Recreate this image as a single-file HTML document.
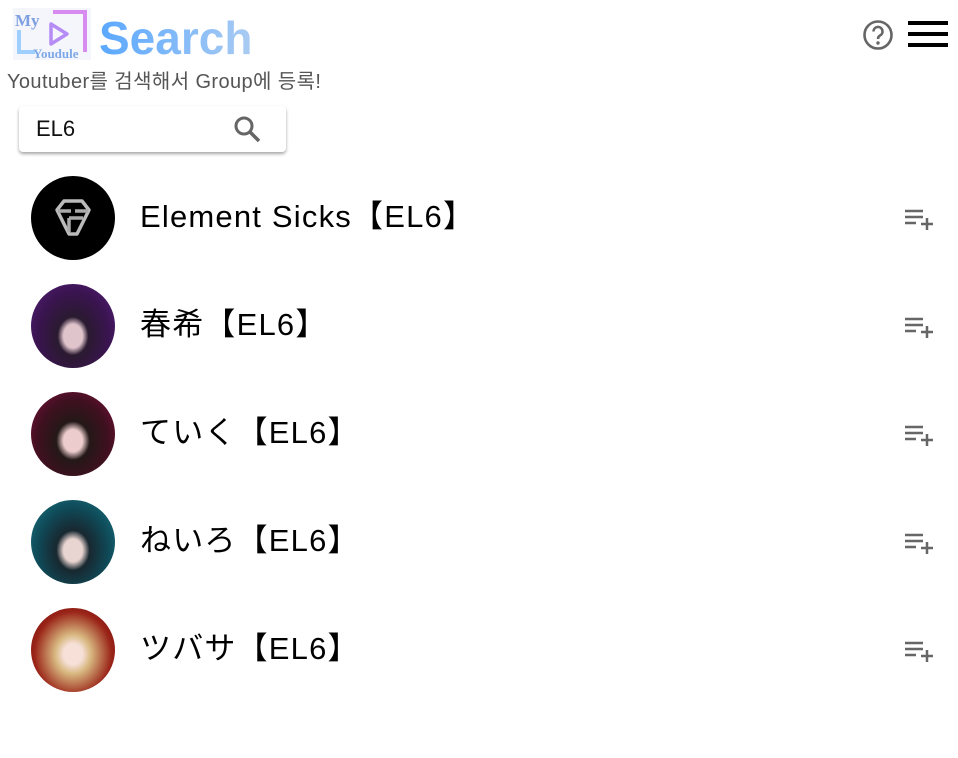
<!DOCTYPE html>
<html><head><meta charset="utf-8"><style>
body{margin:0;width:958px;height:696px;overflow:hidden;background:#fff;font-family:"Liberation Sans","Noto Sans CJK JP",sans-serif;position:relative}
.abs{position:absolute}
.row{position:absolute;left:0;width:958px;height:108px}
.av{position:absolute;left:31px;top:-42px;width:84px;height:84px;border-radius:50%}
.nm{position:absolute;left:140px;top:-21px;font-size:31px;letter-spacing:1.2px;color:#000;line-height:40px;white-space:nowrap;font-family:"Liberation Sans","Noto Sans CJK JP",sans-serif}
</style></head><body>
<svg class="abs" style="left:13px;top:8px" width="78" height="52" viewBox="0 0 78 52">
<rect x="0" y="0" width="78" height="52" fill="#f4f6fb"/>
<path d="M40 4 H72 V44" stroke="#d98cf0" stroke-width="4" fill="none"/>
<path d="M6 22 V44 H22" stroke="#9fcfff" stroke-width="4" fill="none"/>
<path d="M38 16 L54 26 L38 36 Z" stroke="#b58cf5" stroke-width="3.5" fill="none" stroke-linejoin="round"/>
<text x="2" y="18" font-family="Liberation Serif,serif" font-size="17" font-weight="bold" fill="#7fa0e0">My</text>
<text x="20" y="50" font-family="Liberation Serif,serif" font-size="13" font-weight="bold" fill="#7fa8e8">Youdule</text>
</svg>
<div class="abs" style="left:99px;top:10px;font-size:46px;font-weight:bold;line-height:56px;background:linear-gradient(90deg,#5aa8ff,#a9cbf2);-webkit-background-clip:text;color:transparent">Search</div>
<div class="abs" style="left:7px;top:70px;font-size:20px;letter-spacing:0.4px;color:#555;line-height:24px;font-family:'Liberation Sans','Noto Sans CJK KR',sans-serif">Youtuber를 검색해서 Group에 등록!</div>
<svg class="abs" style="left:862px;top:19px" width="32" height="32" viewBox="0 0 32 32"><circle cx="16" cy="16" r="13.5" stroke="#666" stroke-width="2.6" fill="none"/><path d="M11.5 12.5 a4.5 4.5 0 1 1 6.5 4 c-1.5 .8 -2 1.6 -2 3.5" stroke="#666" stroke-width="2.6" fill="none"/><circle cx="16" cy="24" r="1.7" fill="#666"/></svg>
<div class="abs" style="left:908px;top:21px;width:40px;height:4px;background:#000"></div>
<div class="abs" style="left:908px;top:32px;width:40px;height:4px;background:#000"></div>
<div class="abs" style="left:908px;top:43px;width:40px;height:4px;background:#000"></div>
<div class="abs" style="left:19px;top:106px;width:267px;height:46px;border-radius:4px;background:#fff;box-shadow:0 2px 3px rgba(0,0,0,.35)"></div>
<div class="abs" style="left:36px;top:115px;font-size:22px;color:#111;line-height:28px">EL6</div>
<svg class="abs" style="left:232px;top:114px" width="30" height="30" viewBox="0 0 30 30"><circle cx="12" cy="12" r="8" stroke="#666" stroke-width="3" fill="none"/><path d="M18 18 L27 27" stroke="#666" stroke-width="3.5"/></svg>

<div class="row" style="top:218px">
<div class="av" style="background:#000"><svg width="84" height="84" viewBox="0 0 84 84"><path d="M26 34 L33 25 H51 L58 34 L46 58 H38 Z" stroke="#bbb" stroke-width="3.5" fill="none" stroke-linejoin="round"/><path d="M27 35 H40 M44 35 H57 M38 42 V56 M38 42 H52" stroke="#aaa" stroke-width="3.5" fill="none"/></svg></div>
<div class="nm">Element Sicks【EL6】</div>
</div>
<div class="row" style="top:326px">
<div class="av" style="background:radial-gradient(ellipse at 50% 62%,#e0c4cc 0 16%,#2a1a30 26%,#3a1450 60%,#5a2080 100%)"></div>
<div class="nm">春希【EL6】</div>
</div>
<div class="row" style="top:434px">
<div class="av" style="background:radial-gradient(ellipse at 50% 58%,#eccccc 0 16%,#241818 28%,#401020 60%,#8a1040 100%)"></div>
<div class="nm">ていく【EL6】</div>
</div>
<div class="row" style="top:542px">
<div class="av" style="background:radial-gradient(ellipse at 50% 60%,#e8d4d0 0 16%,#182830 28%,#0f4a58 60%,#1a7a88 100%)"></div>
<div class="nm">ねいろ【EL6】</div>
</div>
<div class="row" style="top:650px">
<div class="av" style="background:radial-gradient(ellipse at 50% 55%,#f6e0d8 0 16%,#d8b880 30%,#9a2418 65%,#6a0808 100%)"></div>
<div class="nm">ツバサ【EL6】</div>
</div>
<svg class="abs" style="left:905px;top:208px" width="30" height="24" viewBox="0 0 30 24"><path d="M0 3H18M0 9H18M0 15H11M22 10V22M16 16H28" stroke="#666" stroke-width="2.5"/></svg>
<svg class="abs" style="left:905px;top:316px" width="30" height="24" viewBox="0 0 30 24"><path d="M0 3H18M0 9H18M0 15H11M22 10V22M16 16H28" stroke="#666" stroke-width="2.5"/></svg>
<svg class="abs" style="left:905px;top:424px" width="30" height="24" viewBox="0 0 30 24"><path d="M0 3H18M0 9H18M0 15H11M22 10V22M16 16H28" stroke="#666" stroke-width="2.5"/></svg>
<svg class="abs" style="left:905px;top:532px" width="30" height="24" viewBox="0 0 30 24"><path d="M0 3H18M0 9H18M0 15H11M22 10V22M16 16H28" stroke="#666" stroke-width="2.5"/></svg>
<svg class="abs" style="left:905px;top:640px" width="30" height="24" viewBox="0 0 30 24"><path d="M0 3H18M0 9H18M0 15H11M22 10V22M16 16H28" stroke="#666" stroke-width="2.5"/></svg>
</body></html>
